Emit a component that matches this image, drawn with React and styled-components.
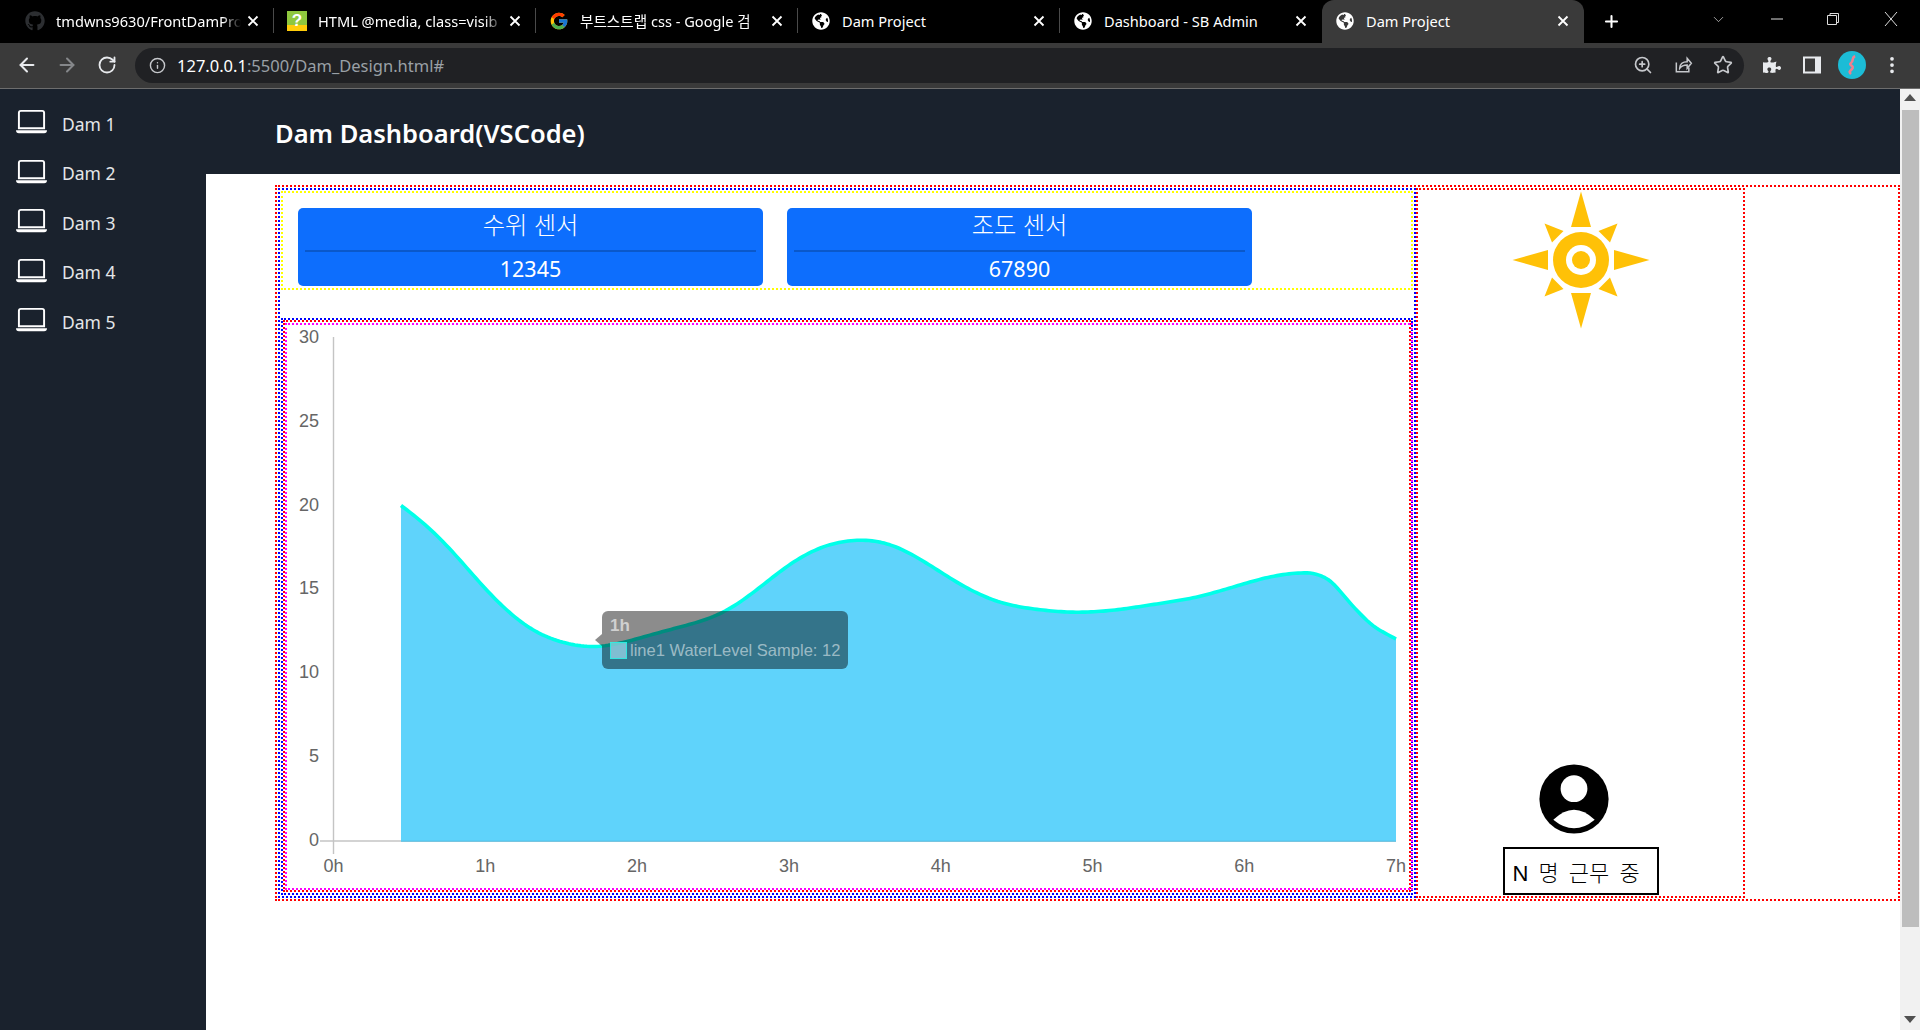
import React from 'react';
import styled, { createGlobalStyle } from 'styled-components';
import { BsLaptop, BsThreeDotsVertical } from 'react-icons/bs';
import { FaGithub, FaPuzzlePiece, FaGlobeAmericas } from 'react-icons/fa';
import { FcGoogle } from 'react-icons/fc';
import { ArrowLeft, ArrowRight, RotateCw, Info, ZoomIn, Star, Plus, ChevronDown } from 'lucide-react';

const Global = createGlobalStyle`
  html, body { margin: 0; padding: 0; height: 100%; overflow: hidden; background: #fff; }
  * { box-sizing: border-box; }
`;

const Shell = styled.div`
  width: 1920px; height: 1030px; display: flex; flex-direction: column; overflow: hidden;
  font-family: "Noto Sans", "Noto Sans CJK KR", sans-serif;
`;

/* browser chrome */
const TabStrip = styled.div`
  height: 43px; background: #000; display: flex; padding-left: 12px; flex: none;
`;
const Tab = styled.div`
  width: 262px; height: 43px; flex: none; display: flex; align-items: center; position: relative;
  background: ${p => (p.$active ? '#3a3a3a' : 'transparent')};
  border-radius: ${p => (p.$active ? '12px 12px 0 0' : '0')};
`;
const TabInner = styled.div`
  flex: 1; min-width: 0; height: 25px; margin-top: -2px; display: flex; align-items: center; padding: 0 14px 0 13px;
  border-right: 1px solid ${p => (p.$sep ? '#4a4a4a' : 'transparent')};
  color: #fff; font-size: 14.6px;
`;
const Fav = styled.div`
  width: 20px; height: 20px; flex: none; display: flex; align-items: center; justify-content: center;
  color: ${p => p.$color || '#fff'};
`;
const TabTitle = styled.div`
  flex: 1; min-width: 0; margin: 0 6px 0 11px; white-space: nowrap;
  ${p => p.$fade && `mask-image: linear-gradient(90deg, #000 90%, transparent 100%);`}
`;
const QaIcon = styled.div`
  width: 20px; height: 20px; flex: none; display: flex; align-items: center; justify-content: center;
  background: linear-gradient(#8fc73e 0 72%, #ffcc0a 72% 100%);
  color: #fff; font: bold 17px "Liberation Sans", sans-serif;
`;
const NewTab = styled.div`
  width: 28px; margin-left: 13px; display: flex; align-items: center; justify-content: center; color: #fff;
`;
const WindowControls = styled.div`
  margin-left: auto; display: flex; align-items: center; color: #ddd; height: 38px;
`;
const WinBtn = styled.div`
  width: ${p => p.$w}px; display: flex; justify-content: center;
`;
const Toolbar = styled.div`
  height: 46px; background: #3a3a3a; border-bottom: 1px solid #6d6d6d; flex: none;
  display: flex; align-items: center; color: #e8eaed; padding: 0 0 1px 7px;
`;
const NavBtn = styled.div`
  width: 40px; display: flex; justify-content: center; color: ${p => (p.$dim ? '#85878a' : '#e8eaed')};
`;
const Omnibox = styled.div`
  width: 1609px; height: 35px; margin-left: 8px; background: #202124; border-radius: 18px; flex: none;
  display: flex; align-items: center; padding: 0 11px 0 14px;
`;
const Url = styled.div`
  margin-left: 11px; font-size: 16.5px; color: #9aa0a6; white-space: nowrap;
  b { color: #fff; font-weight: 400; }
`;
const OmniIcons = styled.div`
  margin-left: auto; display: flex; gap: 20px; color: #c6c8cc; align-items: center;
`;
const ToolIcons = styled.div`
  display: flex; align-items: center; margin-left: 8px;
`;
const ToolBtn = styled.div`
  width: 40px; display: flex; justify-content: center; color: #e8eaed;
`;
const Avatar = styled.div`
  width: 28px; height: 28px; border-radius: 50%; background: #1cbcd6; display: flex;
  align-items: center; justify-content: center;
`;

/* page */
const Viewport = styled.div`
  flex: 1; display: flex; min-height: 0;
`;
const Sidebar = styled.nav`
  width: 206px; flex: none; background: #1a222d; padding-top: 10px;
  display: flex; flex-direction: column;
`;
const SideItem = styled.div`
  height: 49.5px; display: flex; align-items: center; padding-left: 16px; color: #e4e6e8;
`;
const SideIcon = styled(BsLaptop)`
  width: 31px; height: 31px; color: #fff; margin-top: -4px; flex: none;
`;
const SideLabel = styled.span`
  margin-left: 15px; font-size: 17.5px;
`;
const Main = styled.main`
  flex: 1; display: flex; flex-direction: column; min-width: 0;
`;
const TopBar = styled.header`
  height: 85px; background: #1a222d; flex: none; display: flex; align-items: center;
  padding: 3px 0 0 69px;
`;
const Heading = styled.h1`
  margin: 0; color: #fff; font-size: 25.5px; font-weight: 600;
`;
const Content = styled.div`
  flex: 1; background: #fff; padding: 11px 0 0 69px;
`;
const Frame = styled.div`
  width: 1625px; height: 716px; border: 2px dotted #f00; display: flex; align-items: flex-start;
`;
const LeftCol = styled.div`
  width: 1138px; height: 710px; margin: 1px 0 0 1px; border: 2px dotted #00f; flex: none;
  display: flex; flex-direction: column;
`;
const CardRow = styled.div`
  height: 99px; margin: 1px 1px 0; border: 2px dotted #ff0; padding: 15px 0 0 15px;
  display: flex; gap: 24px; align-items: flex-start; flex: none;
`;
const Card = styled.div`
  width: 465px; height: 78px; background: #0d6efd; border-radius: 5px; color: #fff; text-align: center;
  padding: 0 7px; display: flex; flex-direction: column;
`;
const CardTitle = styled.div`
  height: 45px; font-size: 24.3px; line-height: 33px; border-bottom: 2px solid #0a58ca; font-weight: 300;
`;
const CardValue = styled.div`
  font-size: 21.5px; line-height: 34px;
`;
const ChartOuter = styled.div`
  flex: none; height: 577px; margin: 28px 1px 1px; border: 2px dotted #00f;
`;
const ChartMiddle = styled.div`
  height: 572px; border: 2px dotted #f00; margin-bottom: 1px;
`;
const ChartInner = styled.div`
  position: relative; height: 567px; margin: 1px -4px 0 0; border: 2px dotted #f0f;
`;
const ChartSvg = styled.svg`
  display: block; width: 1124px; height: 563px; overflow: visible;
  text { font: 18px "Liberation Sans", Arial, sans-serif; fill: #666; }
`;
const Tip = styled.div`
  position: absolute; left: 315px; top: 286px; width: 246px; height: 58px; border-radius: 6px;
  background: rgba(0,0,0,.45); font-family: "Liberation Sans", Arial, sans-serif;
  color: rgba(255,255,255,.5); padding: 5px 8px;
  &::before {
    content: ''; position: absolute; left: -7px; top: 23px; border: 6px solid transparent;
    border-left-width: 0; border-right: 7px solid rgba(0,0,0,.45);
  }
`;
const TipTitle = styled.div`
  font-size: 17px; font-weight: 700; line-height: 20px; color: rgba(255,255,255,.6);
`;
const TipBody = styled.div`
  margin-top: 5px; display: flex; align-items: center; font-size: 16.5px; line-height: 18px; white-space: nowrap;
  color: rgba(255,255,255,.52);
`;
const TipSwatch = styled.span`
  width: 17px; height: 17px; margin-right: 3px; flex: none; background: rgba(175,235,255,.62);
  border: 1px solid rgba(0,255,234,.6);
`;
const RightCol = styled.aside`
  width: 329px; height: 710px; margin-top: 1px; border: 2px dotted #f00; flex: none;
  display: flex; flex-direction: column; align-items: center;
`;
const SunIcon = styled.svg`
  width: 138px; height: 138px; margin-top: 1px; flex: none;
`;
const PersonIcon = styled.svg`
  width: 70px; height: 70px; margin: auto 13px 13px 0; flex: none;
`;
const Staff = styled.div`
  width: 156px; height: 48px; border: 2px solid #000; margin-bottom: 1px; flex: none;
  font-family: "Liberation Sans", "Noto Sans CJK KR", sans-serif; font-size: 22px; font-weight: 300; color: #000;
  display: flex; align-items: center; padding: 0 0 0 8px; white-space: pre; word-spacing: 4px;
`;
const ScrollTrack = styled.div`
  width: 20px; flex: none; background: #f1f1f1; display: flex; flex-direction: column; align-items: center;
  padding: 0 0 2px;
`;
const ScrollArrow = styled.div`
  height: 17px; display: flex; align-items: center; justify-content: center; flex: none;
  margin-top: ${p => (p.$down ? 'auto' : '0')};
`;
const ScrollThumb = styled.div`
  width: 17px; height: 817px; margin-top: 4px; background: #bdbdbd; flex: none;
`;

const CURVE = [
  [401,505.5],[423,521.5],[450,548],[477,580],[503,608],[530,630],[557,642],[583,647],[597,648],
  [623,643],[657,633],[707,620],[730,610],[757,590],[790,563],[823,545],[857,538.7],[880,540.7],
  [900,547],[930,565],[963,586.7],[997,602.7],[1030,609],[1073,613],[1113,610.7],[1163,603],
  [1197,597.7],[1230,588],[1263,578],[1287,573.7],[1312,572.3],[1330,579],[1353,606.7],[1373,626.7],[1396,639],
];

const X0 = CURVE[0][0];
const X1 = CURVE[CURVE.length - 1][0];

function lerpY(x) {
  for (let i = 0; i < CURVE.length - 1; i++) {
    const [a, b] = [CURVE[i], CURVE[i + 1]];
    if (x <= b[0]) return a[1] + ((x - a[0]) / (b[0] - a[0])) * (b[1] - a[1]);
  }
  return CURVE[CURVE.length - 1][1];
}

// Odd reflection past the two ends keeps the blurred line pinned to its end points.
function traceY(x) {
  if (x < X0) return 2 * CURVE[0][1] - lerpY(2 * X0 - x);
  if (x > X1) return 2 * CURVE[CURVE.length - 1][1] - lerpY(2 * X1 - x);
  return lerpY(x);
}

// The traced points are hand-read, so a Gaussian blur takes out their corners;
// it narrows towards the tight bend after the last peak.
function smoothedY(x) {
  const sigma = x < 1250 ? 14 : x > 1300 ? 6 : 14 - ((x - 1250) / 50) * 8;
  const reach = Math.ceil(sigma * 3);
  let sum = 0, weight = 0;
  for (let t = -reach; t <= reach; t++) {
    const w = Math.exp(-(t * t) / (2 * sigma * sigma));
    sum += w * traceY(x + t);
    weight += w;
  }
  return sum / weight;
}

function buildLine() {
  let d = `M${X0} ${CURVE[0][1]}`;
  for (let x = X0 + 3; x < X1; x += 3) d += `L${x} ${smoothedY(x).toFixed(2)}`;
  return `${d}L${X1} ${CURVE[CURVE.length - 1][1]}`;
}

const CloseX = () => (
  <svg width="12" height="12" viewBox="0 0 12 12" style={{ flex: 'none' }}>
    <path d="M1.5 1.5l9 9M10.5 1.5l-9 9" stroke="#fff" strokeWidth="1.8" />
  </svg>
);

const TABS = [
  { title: 'tmdwns9630/FrontDamPro', fade: true, sep: true, icon: <Fav $color="#2c2e31"><FaGithub size={20} /></Fav> },
  { title: 'HTML @media, class=visib', fade: true, sep: true, icon: <QaIcon>?</QaIcon> },
  { title: '부트스트랩 css - Google 검', fade: true, sep: true, icon: <Fav><FcGoogle size={20} /></Fav> },
  { title: 'Dam Project', sep: true, icon: <Fav><FaGlobeAmericas size={18} /></Fav> },
  { title: 'Dashboard - SB Admin', icon: <Fav><FaGlobeAmericas size={18} /></Fav> },
  { title: 'Dam Project', active: true, icon: <Fav><FaGlobeAmericas size={18} /></Fav> },
];

const SUN_DIAG = '36.5,-36.5 17.5,-29 29,-17.5';

export default function App() {
  const line = buildLine();
  const area = `${line}L1396 841L401 841Z`;
  return (
    <Shell>
      <Global />
      <TabStrip>
        {TABS.map((t, i) => (
          <Tab key={i} $active={t.active}>
            <TabInner $sep={t.sep}>
              {t.icon}
              <TabTitle $fade={t.fade}>{t.title}</TabTitle>
              <CloseX />
            </TabInner>
          </Tab>
        ))}
        <NewTab><Plus size={19} strokeWidth={2.6} /></NewTab>
        <WindowControls>
          <WinBtn $w={64}><ChevronDown size={17} strokeWidth={1} /></WinBtn>
          <WinBtn $w={54}>
            <svg width="14" height="14" viewBox="0 0 14 14"><path d="M1 7h12" stroke="currentColor" /></svg>
          </WinBtn>
          <WinBtn $w={58}>
            <svg width="14" height="14" viewBox="0 0 14 14" fill="none" stroke="currentColor"><path d="M1.5 3.5h9v9h-9zM4 3.5V1.5h8.5v9h-2" /></svg>
          </WinBtn>
          <WinBtn $w={58}>
            <svg width="16" height="16" viewBox="0 0 16 16"><path d="M2 1l12 14M14 1L2 15" stroke="currentColor" /></svg>
          </WinBtn>
        </WindowControls>
      </TabStrip>
      <Toolbar>
        <NavBtn><ArrowLeft size={22} strokeWidth={2.2} /></NavBtn>
        <NavBtn $dim><ArrowRight size={22} strokeWidth={2.2} /></NavBtn>
        <NavBtn><RotateCw size={20} strokeWidth={2.2} /></NavBtn>
        <Omnibox>
          <Info size={17} color="#c6c8cc" />
          <Url><b>127.0.0.1</b>:5500/Dam_Design.html#</Url>
          <OmniIcons>
            <ZoomIn size={20} />
            <svg width="20" height="20" viewBox="0 0 24 24" fill="none" stroke="currentColor" strokeWidth="1.8">
              <path d="M4 9v11h15v-5" />
              <path d="M8 16c0-5 4-8 9-8V4l5 6-5 6v-4c-4 0-7 1-9 4z" />
            </svg>
            <Star size={20} />
          </OmniIcons>
        </Omnibox>
        <ToolIcons>
          <ToolBtn><FaPuzzlePiece size={18} /></ToolBtn>
          <ToolBtn>
            <svg width="18" height="18" viewBox="0 0 18 18" fill="none" stroke="currentColor">
              <path d="M1 1.5h16v15H1z" strokeWidth="2" />
              <path d="M12.5 2v14h4V2z" fill="currentColor" />
            </svg>
          </ToolBtn>
          <ToolBtn>
            <Avatar>
              <svg width="14" height="22" viewBox="0 0 14 22" fill="none" stroke="#f07f8e" strokeWidth="2.6">
                <path d="M10 2C6 4 9 7 6 9s4 3 1 6-3 3-1 5" />
              </svg>
            </Avatar>
          </ToolBtn>
          <ToolBtn><BsThreeDotsVertical size={20} /></ToolBtn>
        </ToolIcons>
      </Toolbar>
      <Viewport>
        <Sidebar>
          {[1, 2, 3, 4, 5].map(n => (
            <SideItem key={n}>
              <SideIcon />
              <SideLabel>Dam {n}</SideLabel>
            </SideItem>
          ))}
        </Sidebar>
        <Main>
          <TopBar><Heading>Dam Dashboard(VSCode)</Heading></TopBar>
          <Content>
            <Frame>
              <LeftCol>
                <CardRow>
                  <Card><CardTitle>수위 센서</CardTitle><CardValue>12345</CardValue></Card>
                  <Card><CardTitle>조도 센서</CardTitle><CardValue>67890</CardValue></Card>
                </CardRow>
                <ChartOuter>
                  <ChartMiddle>
                    <ChartInner>
                      <ChartSvg viewBox="287 325 1124 563">
                        <path d="M333.5 337V854" stroke="#c4c4c4" strokeWidth="1.4" fill="none" />
                        <path d="M320 841H1396" stroke="#c4c4c4" strokeWidth="1.4" fill="none" />
                        {[0, 5, 10, 15, 20, 25, 30].map(v => (
                          <text key={v} x="319" y={845.5 - v * 16.75} textAnchor="end">{v}</text>
                        ))}
                        {[0, 1, 2, 3, 4, 5, 6, 7].map(h => (
                          <text key={h} x={333.5 + h * 151.8} y="872" textAnchor="middle">{h}h</text>
                        ))}
                        <path d={area} fill="#5fd3fb" />
                        <path d="M401 841.2H1396" stroke="#4fbfe6" strokeWidth="1" fill="none" />
                        <path d={line} stroke="#00ffe8" strokeWidth="3.6" strokeLinejoin="round" fill="none" />
                      </ChartSvg>
                      <Tip>
                        <TipTitle>1h</TipTitle>
                        <TipBody><TipSwatch />line1 WaterLevel Sample: 12</TipBody>
                      </Tip>
                    </ChartInner>
                  </ChartMiddle>
                </ChartOuter>
              </LeftCol>
              <RightCol>
                <SunIcon viewBox="-69 -69 138 138">
                  <g fill="#ffc107">
                    <circle r="28" />
                    <polygon points="0,-68.5 -10,-33 10,-33" />
                    <polygon points="0,68.5 -10,33 10,33" />
                    <polygon points="-68.5,0 -33,-10 -33,10" />
                    <polygon points="68.5,0 33,-10 33,10" />
                    {[0, 90, 180, 270].map(a => (
                      <polygon key={a} points={SUN_DIAG} transform={`rotate(${a})`} />
                    ))}
                  </g>
                  <circle r="15" fill="#fff" />
                  <circle r="9" fill="#ffc107" />
                </SunIcon>
                <PersonIcon viewBox="-35 -35 70 70">
                  <circle r="34.6" fill="#000" />
                  <circle cy="-10.3" r="13.4" fill="#fff" />
                  <path d="M-20.7 20.7Q0 0.7 20.7 20.7Q0 37.9 -20.7 20.7Z" fill="#fff" />
                </PersonIcon>
                <Staff>N 명 근무 중</Staff>
              </RightCol>
            </Frame>
          </Content>
        </Main>
        <ScrollTrack>
          <ScrollArrow>
            <svg width="12" height="7" viewBox="0 0 12 7"><path d="M6 0l6 7H0z" fill="#505050" /></svg>
          </ScrollArrow>
          <ScrollThumb />
          <ScrollArrow $down>
            <svg width="12" height="7" viewBox="0 0 12 7"><path d="M0 0h12L6 7z" fill="#505050" /></svg>
          </ScrollArrow>
        </ScrollTrack>
      </Viewport>
    </Shell>
  );
}
